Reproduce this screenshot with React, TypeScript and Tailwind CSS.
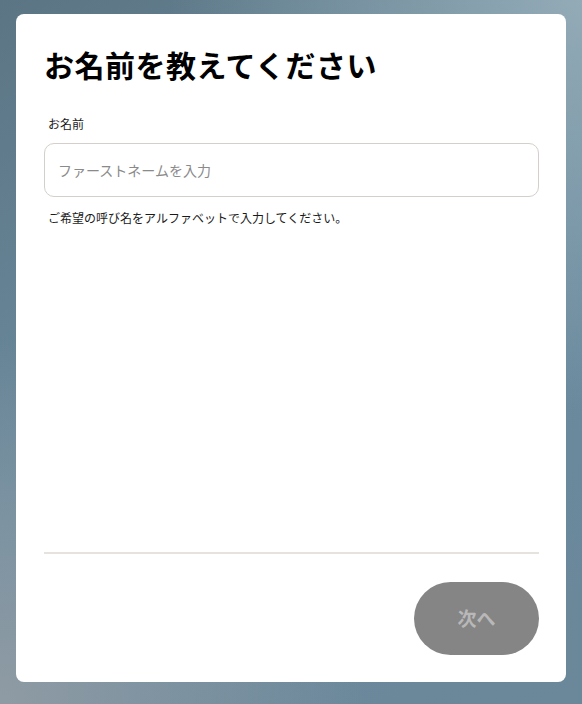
export default function App() {
  return (
    <div
      className="flex h-[704px] w-[582px] items-start justify-start bg-[radial-gradient(circle_at_100%_0%,#93abb7_0%,transparent_45%),radial-gradient(circle_at_0%_100%,#8f9ba4_0%,transparent_40%),linear-gradient(150deg,#5c7584_0%,#6a8b9f_50%,#6b879a_100%)] pt-[14px] pl-4"
      style={{ fontFamily: '"Noto Sans CJK JP", "Noto Sans", sans-serif' }}
    >
      <div className="flex h-[668px] w-[550px] flex-col rounded-lg bg-white pt-7 pr-[27px] pb-[27px] pl-7">
        {/* Form body */}
        <div className="flex-1">
          <h1 className="text-[30px] leading-[44px] font-semibold tracking-[0.5px] text-black">
            お名前を教えてください
          </h1>

          <label className="mt-[28px] block pl-1 text-[12px] leading-[20px] text-[#1a1a1a]">
            お名前
          </label>
          <input
            type="text"
            placeholder="ファーストネームを入力"
            className="mt-[9px] h-[54px] w-full rounded-[10px] border border-[#d4cfca] bg-white px-[13px] text-[14px] text-black outline-none placeholder:text-[#8a8a8a]"
          />
          <p className="mt-[12px] pl-1 text-[12px] leading-[18px] text-[#1a1a1a]">
            ご希望の呼び名をアルファベットで入力してください。
          </p>
        </div>

        {/* Footer */}
        <div className="h-[2px] w-full bg-[#e6e2de]" />
        <div className="flex justify-end pt-[28px]">
          <button className="h-[73px] w-[125px] rounded-full bg-[#858585] text-[19px] font-bold text-[#b8b8b8]">
            次へ
          </button>
        </div>
      </div>
    </div>
  );
}
